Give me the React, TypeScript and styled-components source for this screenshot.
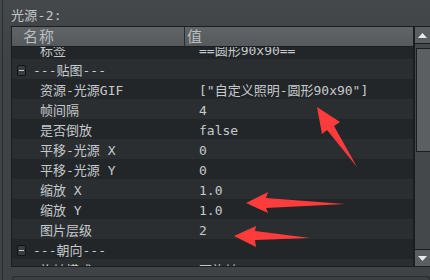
import React from 'react';
import styled, { createGlobalStyle } from 'styled-components';

interface PropRow {
  label: string;
  value?: string;
  group?: boolean;
}

const rows: PropRow[] = [
  { label: '标签', value: '==圆形90x90==' },
  { label: '---贴图---', group: true },
  { label: '资源-光源GIF', value: '["自定义照明-圆形90x90"]' },
  { label: '帧间隔', value: '4' },
  { label: '是否倒放', value: 'false' },
  { label: '平移-光源 X', value: '0' },
  { label: '平移-光源 Y', value: '0' },
  { label: '缩放 X', value: '1.0' },
  { label: '缩放 Y', value: '1.0' },
  { label: '图片层级', value: '2' },
  { label: '---朝向---', group: true },
  { label: '旋转模式', value: '不旋转' }
];

const GlobalStyle = createGlobalStyle`
  html, body {
    margin: 0;
    padding: 0;
    background: #3f4346;
  }
  body {
    font-family: "DejaVu Sans Mono", "Noto Sans CJK SC", monospace;
    font-size: 13px;
  }
`;

const Page = styled.div`
  position: relative;
  width: 430px;
  height: 280px;
  overflow: hidden;
  background: linear-gradient(#44484b, #3f4346 60px);
`;

const Frame = styled.div`
  margin-left: 2px;
  height: 280px;
  border-left: 1px solid #2b2e31;
  padding-left: 8px;
  display: flex;
  flex-direction: column;
`;

const Title = styled.div`
  height: 26px;
  line-height: 32px;
  color: #c3c7ca;
  letter-spacing: 0.3px;
`;

const Table = styled.div`
  height: 241px;
  box-sizing: border-box;
  border: 1px solid #1b1e20;
  border-right: none;
  display: grid;
  grid-template-columns: 1fr 15px;
  overflow: hidden;
`;

const Main = styled.div`
  display: flex;
  flex-direction: column;
  overflow: hidden;
  min-width: 0;
  border-right: 2px solid #1b1e20;
`;

const Header = styled.div`
  height: 19px;
  flex: none;
  display: grid;
  grid-template-columns: 173px 1fr;
  background: linear-gradient(#606467, #565a5d);
  border-bottom: 1px solid #1b1e20;
  color: #b9bec2;
  font-size: 15px;
  overflow: hidden;
`;

const HeaderCell = styled.div<{ $first?: boolean }>`
  padding-left: ${p => (p.$first ? '11px' : '2px')};
  line-height: 20px;
  border-right: ${p => (p.$first ? '1px solid #2a2d30' : 'none')};
  letter-spacing: 1px;
`;

const Body = styled.div`
  flex: 1;
  overflow: hidden;
`;

const Scroller = styled.div`
  margin-top: -8px;
`;

const Row = styled.div<{ $odd: boolean }>`
  height: 20px;
  box-sizing: border-box;
  padding-top: 3px;
  line-height: 17px;
  display: grid;
  grid-template-columns: 187px 1fr;
  background: ${p => (p.$odd ? '#2b2e31' : '#232628')};
  color: #c6cacd;
  white-space: nowrap;
`;

const Label = styled.div`
  padding-left: 28px;
`;

const GroupLabel = styled.div`
  display: flex;
  align-items: center;
  padding-left: 5px;
  gap: 7px;
`;

const Toggle = styled.span`
  width: 7px;
  height: 9px;
  border: 1px solid #111315;
  border-radius: 2px;
  background: #3a3d40;
  position: relative;
  &::after {
    content: '';
    position: absolute;
    left: 1px;
    right: 1px;
    top: 4px;
    height: 1px;
    background: #c8ccd0;
  }
`;

const Value = styled.div``;

const ScrollBar = styled.div`
  display: flex;
  flex-direction: column;
  background: #3f4346;
`;

const ArrowButton = styled.div`
  height: 16px;
  flex: none;
  background: #5a5e61;
  display: flex;
  align-items: center;
  justify-content: center;
  border-bottom: 1px solid #1b1e20;
  &:last-child {
    border-bottom: none;
    border-top: 1px solid #1b1e20;
  }
`;

const Track = styled.div`
  flex: 1;
  padding: 4px 0 0 1px;
  background: #44484b;
`;

const Thumb = styled.div`
  height: 104px;
  box-sizing: border-box;
  border: 1px solid #1b1e20;
  border-right: none;
  background: #5b5f62;
`;

const Footer = styled.div`
  margin-top: 9px;
  margin-left: 1px;
  flex: 1;
  border: 1px solid #2a2d30;
  border-bottom: none;
  border-radius: 3px 3px 0 0;
  background: #3b3f42;
`;

// red annotation arrows drawn over the table
const Overlay = styled.svg`
  position: absolute;
  left: 0;
  top: 0;
  pointer-events: none;
`;

const Tri = ({ down }: { down?: boolean }) => (
  <svg width="9" height="5" viewBox="0 0 9 5">
    <polygon points={down ? '0,0 9,0 4.5,5' : '0,5 9,5 4.5,0'} fill="#e8eaeb" />
  </svg>
);

const App = () => {
  return (
    <Page>
      <GlobalStyle />
      <Frame>
        <Title>光源-2:</Title>
        <Table>
          <Main>
            <Header>
              <HeaderCell $first>名称</HeaderCell>
              <HeaderCell>值</HeaderCell>
            </Header>
            <Body>
              <Scroller>
                {rows.map((r, i) => (
                  <Row key={i} $odd={i % 2 === 1}>
                    {r.group ? (
                      <GroupLabel>
                        <Toggle />
                        {r.label}
                      </GroupLabel>
                    ) : (
                      <Label>{r.label}</Label>
                    )}
                    <Value>{r.value}</Value>
                  </Row>
                ))}
              </Scroller>
            </Body>
          </Main>
          <ScrollBar>
            <ArrowButton>
              <Tri />
            </ArrowButton>
            <Track>
              <Thumb />
            </Track>
            <ArrowButton>
              <Tri down />
            </ArrowButton>
          </ScrollBar>
        </Table>
        <Footer />
      </Frame>
      <Overlay width="430" height="280" viewBox="0 0 430 280">
        <polygon
          points="317,107 340,122 334,126 357,167 327,130 322,134"
          fill="#ff3b3b"
        />
        <polygon
          points="246,203 268,192 266,198 345,204 266,208 268,213"
          fill="#ff3b3b"
        />
        <polygon
          points="234,236 256,226 255,231 310,238 255,240 256,247"
          fill="#ff3b3b"
        />
      </Overlay>
    </Page>
  );
};

export default App;
